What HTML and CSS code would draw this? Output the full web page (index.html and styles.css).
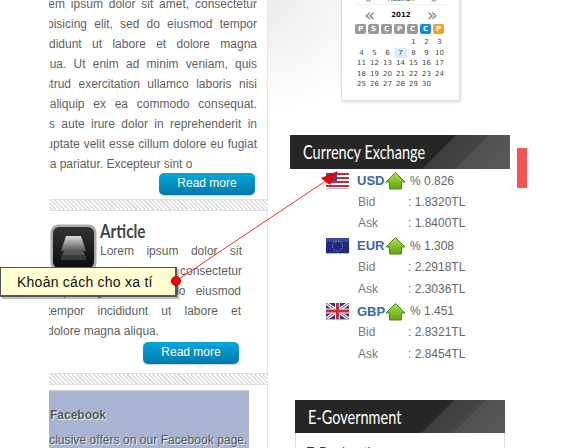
FILE: index.html
```html
<!DOCTYPE html>
<html lang="vi">
<head>
<meta charset="utf-8">
<title>Currency Exchange</title>
<link rel="stylesheet" href="styles.css">
</head>
<body>
<svg class="defs" width="0" height="0" aria-hidden="true">
  <defs>
    <linearGradient id="upfill" x1="0" y1="0" x2="0" y2="1"><stop offset="0" stop-color="#b4dc50"/><stop offset="1" stop-color="#5fa80c"/></linearGradient>
  </defs>
</svg>
<div class="page">
  <main class="left">
    <section class="card card-first">
      <p class="text">
        <span class="line">Lorem ipsum dolor sit amet, consectetur</span>
        <span class="line">adipisicing elit, sed do eiusmod tempor</span>
        <span class="line">incididunt ut labore et dolore magna</span>
        <span class="line">aliqua. Ut enim ad minim veniam, quis</span>
        <span class="line">nostrud exercitation ullamco laboris nisi</span>
        <span class="line">ut aliquip ex ea commodo consequat.</span>
        <span class="line">Duis aute irure dolor in reprehenderit in</span>
        <span class="line">voluptate velit esse cillum dolore eu fugiat</span>
        <span class="line last">nulla pariatur. Excepteur sint o</span>
      </p>
      <div class="actions"><a class="btn">Read more</a></div>
    </section>
    <div class="hatch"></div>
    <section class="card card-article">
      <div class="article-top">
        <svg class="app-icon" width="47" height="47" viewBox="0 0 47 47">
          <defs>
            <linearGradient id="tile" x1="0" y1="0" x2="0" y2="1"><stop offset="0" stop-color="#333"/><stop offset="1" stop-color="#0c0c0c"/></linearGradient>
            <linearGradient id="layer" x1="0" y1="0" x2="0" y2="1"><stop offset="0" stop-color="#dcdcdc"/><stop offset="1" stop-color="#555"/></linearGradient>
          </defs>
          <rect x="0.5" y="0.5" width="46" height="46" rx="8" fill="#aaa"/>
          <rect x="3" y="3" width="41" height="41" rx="6" fill="url(#tile)"/>
          <path d="M14 27 L33 27 L36 33 L11 33Z" fill="#555"/>
          <path d="M12 31 L35 31 L36 36 L11 36Z" fill="#3a3a3a"/>
          <path d="M16 12 L31 12 L36 27 L11 27Z" fill="url(#layer)"/>
        </svg>
        <div class="article-body">
          <h3 class="article-title"><span class="squeeze-title">Article</span></h3>
          <span class="line plain">Lorem ipsum dolor sit</span>
          <span class="line plain">amet, consectetur</span>
        </div>
      </div>
      <p class="text text-article">
        <span class="line">adipisicing elit, sed do eiusmod</span>
        <span class="line">tempor incididunt ut labore et</span>
        <span class="line last">dolore magna aliqua.</span>
      </p>
      <div class="actions actions-article"><a class="btn">Read more</a></div>
    </section>
    <div class="hatch"></div>
    <section class="card card-fb">
      <div class="fb">
        <div class="fb-title">Facebook</div>
        <div class="fb-text">Exclusive offers on our Facebook page.</div>
      </div>
    </section>
  </main>

  <aside class="right">
    <div class="calendar">
      <div class="cal-month"><span class="chev">«</span><span>Haziran</span><span class="chev">»</span></div>
      <div class="cal-year"><span class="chev big">«</span><b>2012</b><span class="chev big">»</span></div>
      <div class="cal-grid">
        <span class="dn">P</span><span class="dn">S</span><span class="dn">Ç</span><span class="dn">P</span><span class="dn">C</span><span class="dn sat">C</span><span class="dn sun">P</span>
      </div>
      <div class="cal-grid cal-days">
        <span></span><span></span><span></span><span></span><span>1</span><span>2</span><span>3</span>
        <span>4</span><span>5</span><span>6</span><span class="today">7</span><span>8</span><span>9</span><span>10</span>
        <span>11</span><span>12</span><span>13</span><span>14</span><span>15</span><span>16</span><span>17</span>
        <span>18</span><span>19</span><span>20</span><span>21</span><span>22</span><span>23</span><span>24</span>
        <span>25</span><span>26</span><span>27</span><span>28</span><span>29</span><span>30</span><span></span>
      </div>
    </div>

    <div class="exchange-wrap">
      <div class="exchange">
        <h2 class="bar"><span class="squeeze">Currency Exchange</span></h2>
        <div class="rates">
          <div class="rate-head">
            <svg class="flag" width="23" height="16" viewBox="0 0 23 16"><rect width="23" height="16" fill="#fff"/><g fill="#c8283c"><rect width="23" height="2"/><rect y="4" width="23" height="2"/><rect y="8" width="23" height="2"/><rect y="12" width="23" height="2"/></g><rect width="11" height="8" fill="#3c4a8c"/><rect y="15" width="23" height="1" fill="#bbb"/></svg>
            <b class="code">USD</b>
            <svg class="up" width="21" height="19" viewBox="0 0 21 19"><path d="M10.5 1.5 L20 11 L16.5 11 L16.5 18 L4.5 18 L4.5 11 L1 11Z" fill="url(#upfill)" stroke="#3f8f10"/></svg>
            <span class="pct">% 0.826</span>
          </div>
          <div class="rate-row"><span class="lab">Bid</span><span>: 1.8320TL</span></div>
          <div class="rate-row"><span class="lab">Ask</span><span>: 1.8400TL</span></div>
          <div class="rate-head">
            <svg class="flag" width="23" height="16" viewBox="0 0 23 16"><rect width="23" height="16" fill="#1c2a8c"/><rect width="23" height="4" fill="#3a4a9c"/><circle cx="11.5" cy="8" r="5" fill="none" stroke="#e8d040" stroke-width="1" stroke-dasharray="1 1.6"/><rect y="15" width="23" height="1" fill="#bbb"/></svg>
            <b class="code">EUR</b>
            <svg class="up" width="21" height="19" viewBox="0 0 21 19"><path d="M10.5 1.5 L20 11 L16.5 11 L16.5 18 L4.5 18 L4.5 11 L1 11Z" fill="url(#upfill)" stroke="#3f8f10"/></svg>
            <span class="pct">% 1.308</span>
          </div>
          <div class="rate-row"><span class="lab">Bid</span><span>: 2.2918TL</span></div>
          <div class="rate-row"><span class="lab">Ask</span><span>: 2.3036TL</span></div>
          <div class="rate-head">
            <svg class="flag" width="23" height="17" viewBox="0 0 23 17"><rect width="23" height="16" fill="#27337f"/><path d="M0 0L23 16M23 0L0 16" stroke="#fff" stroke-width="3.4"/><path d="M0 0L23 16M23 0L0 16" stroke="#c8283c" stroke-width="1"/><path d="M11.5 0V16M0 8H23" stroke="#fff" stroke-width="5"/><path d="M11.5 0V16M0 8H23" stroke="#c8283c" stroke-width="3"/><rect y="16" width="23" height="1" fill="#bbb"/></svg>
            <b class="code">GBP</b>
            <svg class="up" width="21" height="19" viewBox="0 0 21 19"><path d="M10.5 1.5 L20 11 L16.5 11 L16.5 18 L4.5 18 L4.5 11 L1 11Z" fill="url(#upfill)" stroke="#3f8f10"/></svg>
            <span class="pct">% 1.451</span>
          </div>
          <div class="rate-row"><span class="lab">Bid</span><span>: 2.8321TL</span></div>
          <div class="rate-row"><span class="lab">Ask</span><span>: 2.8454TL</span></div>
        </div>
      </div>
      <div class="redbar"></div>
    </div>

    <div class="gov">
      <h2 class="bar"><span class="squeeze">E-Government</span></h2>
      <div class="gov-body">E-Declaration</div>
    </div>
  </aside>
</div>

<svg class="arrow" width="584" height="448" viewBox="0 0 584 448">
  <line x1="176" y1="281" x2="330" y2="178" stroke="#ff2a2a" stroke-width="1"/>
  <path d="M338 171 L321 178 L330 185Z" fill="#e8000a"/>
</svg>
<div class="note">Khoản cách cho xa tí</div>
<div class="dot"></div>
</body>
</html>
```

FILE: styles.css
```css
* { box-sizing: border-box; }
html, body { margin: 0; padding: 0; height: 448px; overflow: hidden; background: #fff; }
body { font-family: "Liberation Sans", Arial, sans-serif; font-size: 12px; color: #666; }
.defs { position: absolute; }
.page { display: flex; width: 584px; height: 448px; overflow: hidden; }

.left { width: 219px; flex: none; margin-left: 49px; overflow: hidden; }
.card { background: #fff; border-right: 1px solid #e4e4e4; }
.card-first { padding-top: 1px; margin-top: -7px; height: 206px; }
.text { margin: 0 0 0 -18px; width: 226px; line-height: 20px; color: #5f5f5f; }
.line { display: block; text-align: justify; text-align-last: justify; white-space: nowrap; }
.line.last { text-align-last: left; }
.actions { display: flex; justify-content: flex-end; padding: 0 12px 0 0; margin-top: -1px; }
.btn { display: block; width: 96px; height: 22px; line-height: 21px; text-align: center; color: #fff; border-radius: 5px; background: linear-gradient(#04a7de, #0378a8); box-shadow: 0 1px 1px rgba(0,0,0,.2); }

.hatch { height: 12px; border-top: 1px solid #e0e0e0; border-bottom: 1px solid #e0e0e0; background: repeating-linear-gradient(45deg, #fff 0 1.5px, #dcdcdc 1.5px 3px); }

.card-article { height: 162px; padding-top: 10px; }
.article-top { display: flex; gap: 3px; margin-left: 1px; height: 60px; }
.app-icon { flex: none; margin-top: 3px; }
.article-body { flex: 1; padding-right: 25px; }
.article-title { margin: 0; font: bold 18px/20px "Lato", "Liberation Sans", sans-serif; color: #444; }
.squeeze-title { display: inline-block; transform: scaleX(.85); transform-origin: 0 50%; }
.line.plain { line-height: 20px; color: #5f5f5f; }
.text-article { margin: 0 0 0 -2px; width: 194px; }
.actions-article { padding-right: 28px; margin-top: 1px; }

.card-fb { height: 70px; padding-top: 5px; }
.fb { width: 200px; height: 70px; background: #a8b4d2; overflow: hidden; border-top: 1px solid #ccc; }
.fb-title { margin-top: 17px; padding-left: 1px; font-weight: bold; color: #555; text-shadow: 1px 1px 1px #fff; }
.fb-text { margin-top: 11px; margin-left: -14px; white-space: nowrap; letter-spacing: .05px; color: #555; text-shadow: 1px 1px 1px #fff; }

.right { flex: 1; background: radial-gradient(ellipse 120px 110px at 0 0, #ebebeb, #fff) no-repeat; display: flex; flex-direction: column; }
.right > * { flex: none; }
.calendar { width: 119px; height: 106px; margin: -5px 0 0 73px; background: #fff; border: 1px solid #ddd; box-shadow: 1px 1px 3px rgba(0,0,0,.15); padding-left: 13px; font-family: "DejaVu Sans", sans-serif; font-size: 7px; color: #444; }
.cal-month, .cal-year { display: flex; justify-content: center; gap: 16px; width: 92px; align-items: center; }
.cal-month { height: 7px; line-height: 7px; }
.cal-year { height: 20px; margin-top: 1px; font-size: 7px; color: #111; border-top: 1px solid #f0f0f0; }
.chev { color: #888; font-size: 11px; }
.chev.big { font-size: 18px; line-height: 14px; }
.cal-grid { display: grid; grid-template-columns: repeat(7, 13px); }
.dn { width: 11px; height: 10px; border-radius: 2px; background: #999; color: #fff; font-weight: bold; text-align: center; line-height: 10px; font-size: 7px; }
.dn.sat { background: #0a8cf0; }
.dn.sun { background: #f8a018; }
.cal-days { grid-auto-rows: 10.5px; margin-top: 3px; text-align: center; line-height: 10.5px; font-size: 7px; }
.today { background: #d4eefc; border-radius: 2px; }

.exchange-wrap { display: flex; margin: 34px 0 0 22px; height: 265px; }
.exchange { width: 220px; }
.bar { margin: 0; height: 34px; color: #fff; font: normal 20px/33px "Lato", "Liberation Sans", sans-serif; padding-left: 13px; background: linear-gradient(135deg, #262626 0 65%, #3f3f3f 66%, #454545 78%, #525252 79%, #5a5a5a 100%); }
.squeeze { display: inline-block; transform: scaleX(.725); transform-origin: 0 50%; white-space: nowrap; }
.redbar { width: 10px; height: 40px; margin: 13px 0 0 7px; background: #ff5050; }
.rates { padding: 1px 0 0 36px; }
.rate-head { display: flex; align-items: center; height: 21.6px; }
.flag { flex: none; margin-right: 8px; }
.code { width: 28px; flex: none; color: #3a68a8; font-size: 13px; }
.up { flex: none; margin-right: 4px; }
.pct { color: #666; }
.rate-row { display: flex; height: 21.8px; line-height: 21.8px; padding-left: 32px; color: #666; }
.lab { width: 50px; color: #777; }

.gov { width: 210px; margin: 0 0 0 27px; height: 60px; }
.gov-body { border: 1px solid #ddd; border-top: none; height: 40px; padding: 11px 10px; color: #333; font-size: 13px; }
.gov .bar { height: 33px; }

.arrow { position: absolute; left: 0; top: 0; pointer-events: none; }
.note { position: absolute; left: 0; top: 267px; width: 177px; height: 30px; padding-left: 16px; line-height: 29px; font-size: 14px; letter-spacing: .25px; color: #111; background: #ffffd2; border: 1px solid #555; border-width: 1px 2px 2px 1px; box-shadow: 2px 2px 1px rgba(0,0,0,.25); }
.dot { position: absolute; left: 171px; top: 276px; width: 10px; height: 10px; border-radius: 50%; background: #f00; border: 1px solid #b00; }
```
